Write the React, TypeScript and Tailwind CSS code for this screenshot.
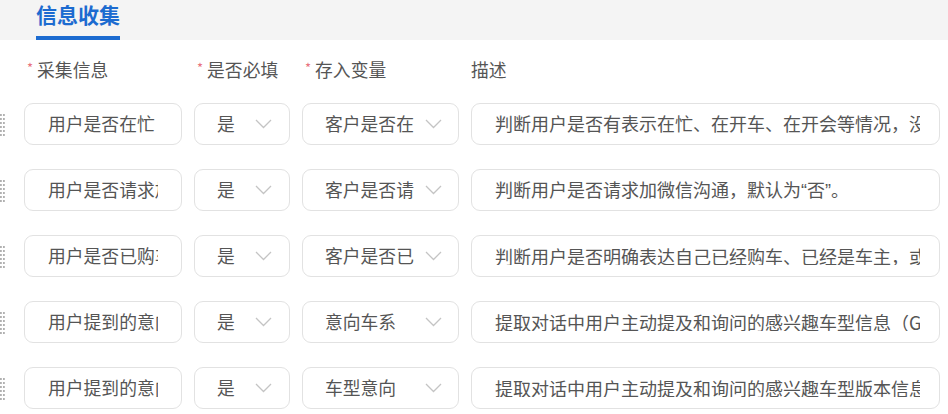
import React from "react";

const rows = [
  { name: "用户是否在忙", req: "是", v: "客户是否在忙", desc: "判断用户是否有表示在忙、在开车、在开会等情况，没有则默认为“否”。" },
  { name: "用户是否请求加微信", req: "是", v: "客户是否请求加微信", desc: "判断用户是否请求加微信沟通，默认为“否”。" },
  { name: "用户是否已购车", req: "是", v: "客户是否已购车", desc: "判断用户是否明确表达自己已经购车、已经是车主，或者已经提车。" },
  { name: "用户提到的意向车系", req: "是", v: "意向车系", desc: "提取对话中用户主动提及和询问的感兴趣车型信息（G6、G9等）" },
  { name: "用户提到的意向车型", req: "是", v: "车型意向", desc: "提取对话中用户主动提及和询问的感兴趣车型版本信息" },
];

const Chevron = () => (
  <svg width="17" height="10" viewBox="0 0 17 10" className="shrink-0">
    <polyline points="1,1 8.5,8.5 16,1" fill="none" stroke="#c4c4c4" strokeWidth="1.3" />
  </svg>
);

const Handle = () => (
  <svg width="5" height="24" viewBox="0 0 5 24">
    {[2, 6, 10, 14, 18, 22].map((y) => (
      <g key={y}>
        <rect x="0" y={y - 1} width="1.8" height="2" fill="#b0b0b0" />
        <rect x="3" y={y - 1} width="1.8" height="2" fill="#b0b0b0" />
      </g>
    ))}
  </svg>
);

const Desc = ({ text }: { text: string }) => {
  const parts = text.split(/([“”])/);
  return (
    <>
      {parts.map((p, i) =>
        p === "“" || p === "”" ? (
          <span key={i} style={{ fontFamily: '"Liberation Sans", sans-serif' }}>{p}</span>
        ) : (
          <span key={i}>{p}</span>
        )
      )}
    </>
  );
};

const Label = ({ text, star }: { text: string; star?: boolean }) => (
  <div className="flex items-center h-[24px]">
    {star && <span className="text-[#e8727e] text-[13px] ml-[3px] mr-[4px] -mt-[6px]">*</span>}
    <span>{text}</span>
  </div>
);

export default function App() {
  return (
    <div
      className="w-[948px] h-[414px] bg-white overflow-hidden text-[#555] text-[17.8px] leading-none"
      style={{ fontFamily: '"Noto Sans CJK SC", "Noto Sans", sans-serif' }}
    >
      <div className="h-[40px] bg-[#f4f4f4] pl-[36px] flex">
        <div className="flex flex-col justify-between">
          <div className="text-[#1c6bd0] font-bold text-[21px] leading-none pt-[4px]">信息收集</div>
          <div className="h-[4px] bg-[#1c6bd0]" />
        </div>
      </div>

      <div className="pl-[24px] pt-[18px]">
        <div className="flex gap-[12px] mb-[21px]">
          <div className="w-[158px]"><Label text="采集信息" star /></div>
          <div className="w-[96px]"><Label text="是否必填" star /></div>
          <div className="w-[157px]"><Label text="存入变量" star /></div>
          <div className="w-[469px]"><Label text="描述" /></div>
        </div>

        <div className="flex flex-col gap-[24px]">
          {rows.map((r, i) => (
            <div key={i} className="flex gap-[12px] relative">
              <div className="absolute left-[-24px] top-[10px]"><Handle /></div>
              <div className="w-[158px] h-[42px] border border-[#e2e2e2] rounded-[9px] flex items-center px-[23px]">
                <div className="overflow-hidden whitespace-nowrap w-full">{r.name}</div>
              </div>
              <div className="w-[96px] h-[42px] border border-[#e2e2e2] rounded-[9px] flex items-center justify-between pl-[22px] pr-[17px]">
                <span>{r.req}</span>
                <Chevron />
              </div>
              <div className="w-[157px] h-[42px] border border-[#e2e2e2] rounded-[9px] flex items-center justify-between pl-[22px] pr-[16px]">
                <div className="overflow-hidden whitespace-nowrap w-[89px]">{r.v}</div>
                <Chevron />
              </div>
              <div className="w-[469px] h-[42px] border border-[#e2e2e2] rounded-[9px] flex items-center pl-[23px] pr-[19px] text-[18px]">
                <div className="overflow-hidden whitespace-nowrap w-full"><Desc text={r.desc} /></div>
              </div>
            </div>
          ))}
        </div>
      </div>
    </div>
  );
}
